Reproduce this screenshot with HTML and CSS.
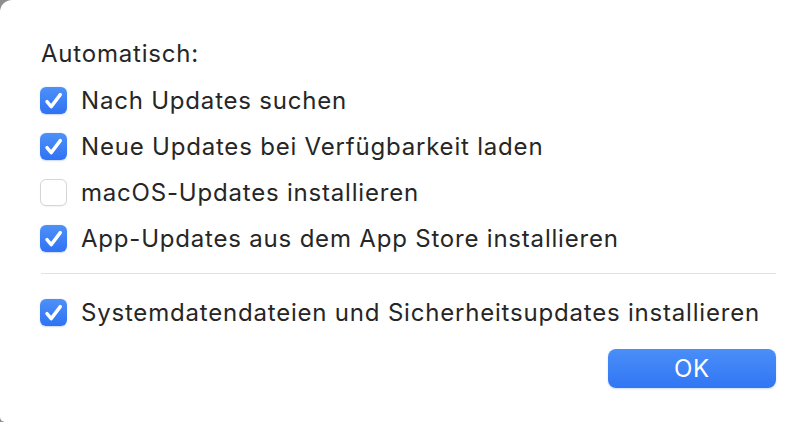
FILE: index.html
```html
<!DOCTYPE html>
<html lang="de">
<head>
<meta charset="utf-8">
<title>Automatisch</title>
<link rel="stylesheet" href="styles.css">
</head>
<body>
<div class="window">
  <div class="heading">Automatisch:</div>
  <label class="row"><span class="box checked"><svg viewBox="0 0 27 27"><path d="M7 14.6 L11.2 19.6 L20.3 7.6"/></svg></span><span class="label">Nach Updates suchen</span></label>
  <label class="row"><span class="box checked"><svg viewBox="0 0 27 27"><path d="M7 14.6 L11.2 19.6 L20.3 7.6"/></svg></span><span class="label">Neue Updates bei Verfügbarkeit laden</span></label>
  <label class="row"><span class="box"></span><span class="label">macOS-Updates installieren</span></label>
  <label class="row"><span class="box checked"><svg viewBox="0 0 27 27"><path d="M7 14.6 L11.2 19.6 L20.3 7.6"/></svg></span><span class="label">App-Updates aus dem App Store installieren</span></label>
  <div class="separator"></div>
  <label class="row row-last"><span class="box checked"><svg viewBox="0 0 27 27"><path d="M7 14.6 L11.2 19.6 L20.3 7.6"/></svg></span><span class="label">Systemdatendateien und Sicherheitsupdates installieren</span></label>
  <div class="actions"><button class="ok">OK</button></div>
</div>
</body>
</html>
```
FILE: styles.css
```css
html, body {
  margin: 0;
  padding: 0;
  background: #8e8e8e;
}
.window {
  box-sizing: border-box;
  width: 812px;
  height: 422px;
  background: #ffffff;
  border-radius: 12px 0 0 5px;
  padding: 31px 36px 0 40px;
  font-family: Inter, "Noto Sans", sans-serif;
  font-size: 24px;
  letter-spacing: 0.8px;
  color: #262626;
  display: flex;
  flex-direction: column;
}
.heading {
  height: 46px;
  line-height: 46px;
  padding-left: 1px;
}
.row {
  height: 46px;
  display: flex;
  align-items: center;
  gap: 14px;
}
.box {
  box-sizing: border-box;
  width: 27px;
  height: 27px;
  flex: none;
  border-radius: 6px;
  border: 1px solid #d6d6d6;
  background: #fff;
  box-shadow: 0 0.5px 1px rgba(0,0,0,0.05);
}
.box.checked {
  border: none;
  background: linear-gradient(#4d91f8, #2f72f4);
  box-shadow: 0 0.5px 1.5px rgba(40,100,230,0.25);
}
.box svg {
  display: block;
  width: 27px;
  height: 27px;
}
.box path {
  fill: none;
  stroke: #fff;
  stroke-width: 3.4;
  stroke-linecap: round;
  stroke-linejoin: round;
}
.separator {
  height: 1px;
  background: #e2e2e2;
  margin-top: 12px;
  margin-left: 1px;
}
.row-last {
  margin-top: 15px;
}
.actions {
  display: flex;
  justify-content: flex-end;
  margin-top: 14px;
}
.ok {
  width: 168px;
  height: 39px;
  border: none;
  border-radius: 8px;
  background: linear-gradient(#4a8ef8, #3176f4);
  color: #fff;
  font-family: Inter, "Noto Sans", sans-serif;
  font-size: 24px;
  letter-spacing: 0.8px;
  box-shadow: 0 1px 2px rgba(49,118,244,0.25);
}
```
